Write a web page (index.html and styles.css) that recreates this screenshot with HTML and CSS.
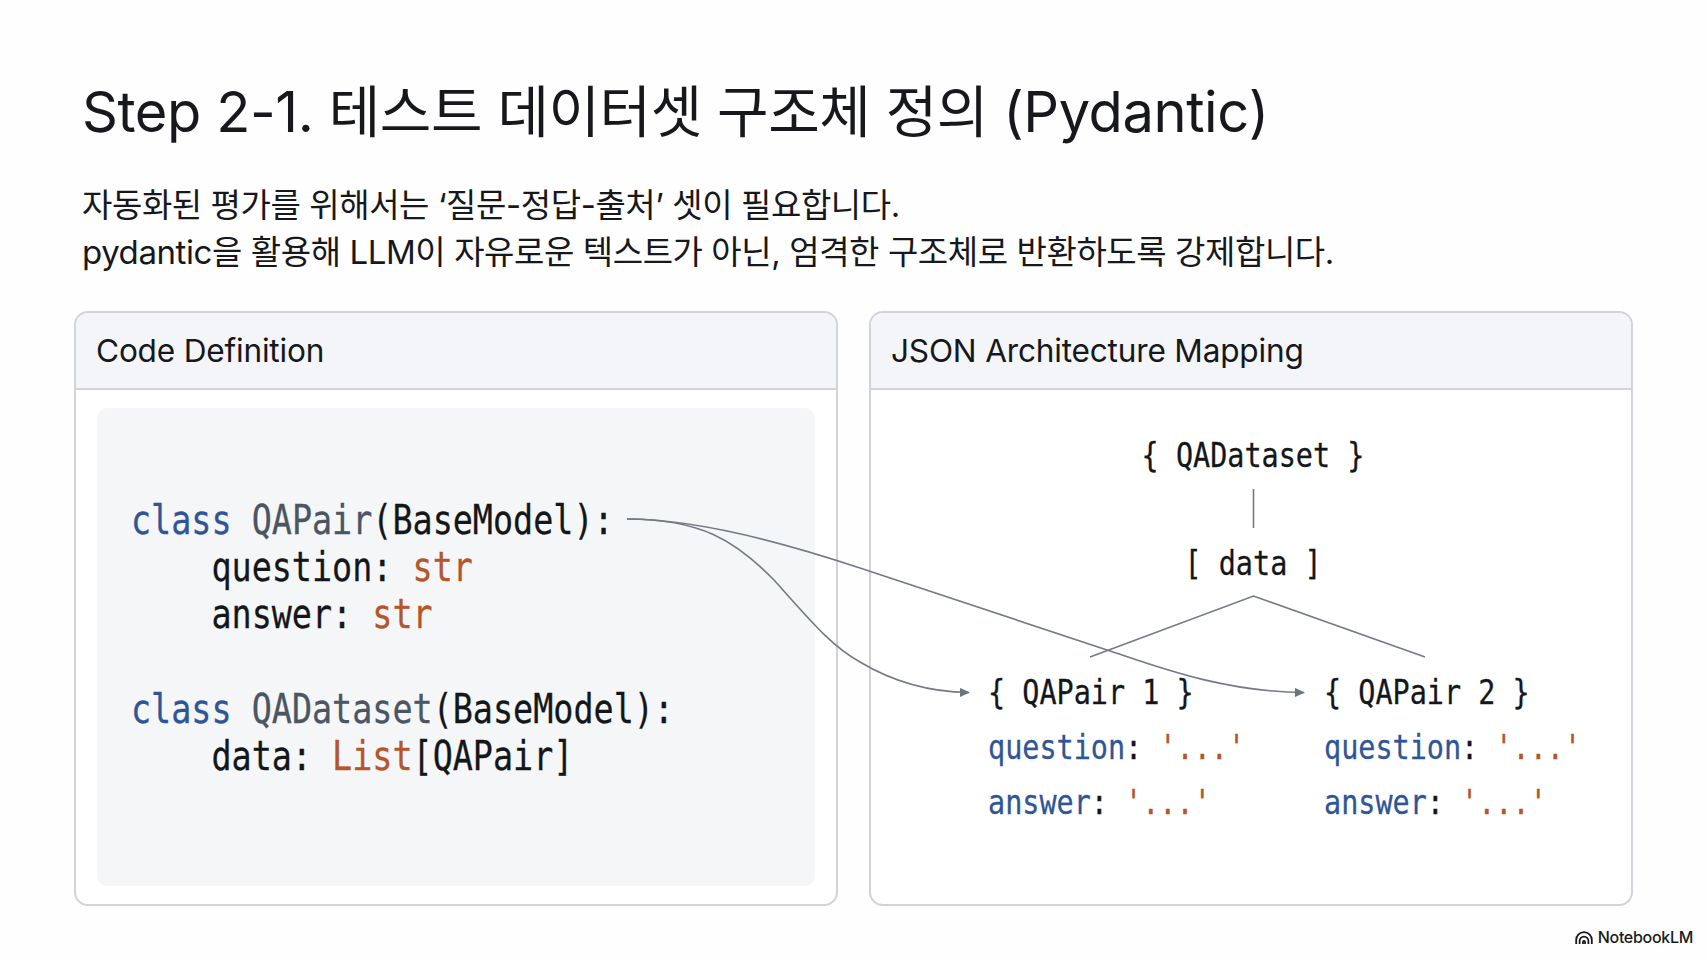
FILE: index.html
```html
<!DOCTYPE html>
<html lang="ko">
<head>
<meta charset="utf-8">
<title>Step 2-1</title>
<link rel="stylesheet" href="styles.css">
</head>
<body>
<main class="page">
  <h1 class="title">Step 2-1. 테스트 데이터셋 구조체 정의 (Pydantic)</h1>
  <p class="lead">자동화된 평가를 위해서는 ‘질문-정답-출처’ 셋이 필요합니다.<br>pydantic을 활용해 LLM이 자유로운 텍스트가 아닌, 엄격한 구조체로 반환하도록 강제합니다.</p>
  <section class="panels">
    <article class="panel">
      <header class="panel-head">Code Definition</header>
      <div class="panel-body code-wrap">
        <div class="code-block">
          <div class="code-line"><span class="kw">class</span> <span class="name">QAPair</span>(BaseModel):</div>
          <div class="code-line">    question: <span class="type">str</span></div>
          <div class="code-line">    answer: <span class="type">str</span></div>
          <div class="code-line code-gap"></div>
          <div class="code-line"><span class="kw">class</span> <span class="name">QADataset</span>(BaseModel):</div>
          <div class="code-line">    data: <span class="type">List</span>[QAPair]</div>
        </div>
      </div>
    </article>
    <article class="panel">
      <header class="panel-head">JSON Architecture Mapping</header>
      <div class="panel-body diagram">
        <div class="node node-root">{ QADataset }</div>
        <div class="node node-data">[ data ]</div>
        <div class="pairs">
          <div class="pair">
            <div class="node">{ QAPair 1 }</div>
            <div class="node"><span class="key">question</span>: <span class="val">'...'</span></div>
            <div class="node"><span class="key">answer</span>: <span class="val">'...'</span></div>
          </div>
          <div class="pair">
            <div class="node">{ QAPair 2 }</div>
            <div class="node"><span class="key">question</span>: <span class="val">'...'</span></div>
            <div class="node"><span class="key">answer</span>: <span class="val">'...'</span></div>
          </div>
        </div>
      </div>
    </article>
  </section>
  <footer class="brand">
    <svg class="brand-icon" viewBox="0 0 18 13" aria-hidden="true">
      <path d="M1.2 13V9a7.8 7.8 0 0 1 15.6 0v4" />
      <path d="M4.6 13V10a4.4 4.4 0 0 1 8.8 0v3" />
      <path d="M8 13v-2a1 1 0 0 1 2 0v2" />
    </svg>
    <span>NotebookLM</span>
  </footer>
  <svg class="links" viewBox="0 0 1707 960" aria-hidden="true">
    <defs>
      <marker id="tip" markerWidth="11" markerHeight="10" refX="9" refY="4.5" orient="auto" markerUnits="userSpaceOnUse">
        <path d="M0 0L10 4.5L0 9Z" fill="#6c757f"/>
      </marker>
    </defs>
    <path class="wire" d="M1253.5 489V528"/>
    <path class="wire" d="M1090 657L1253.5 596L1425 657"/>
    <path class="wire" marker-end="url(#tip)" d="M627 519C700 519 735 540 774 580C810 620 830 645 860 662C890 680 925 692 969 692.5"/>
    <path class="wire" marker-end="url(#tip)" d="M627 519C690 519 770 538 860 568C960 601 1040 628 1107 650C1150 664 1220 692 1304 692.5"/>
  </svg>
</main>
</body>
</html>
```
FILE: styles.css
```css
* { box-sizing: border-box; }
html, body { margin: 0; padding: 0; background: #fff; }
.page {
  position: relative;
  width: 1707px;
  height: 960px;
  padding: 77px 74px 0;
  overflow: hidden;
  background: #fefefe;
  color: #16181b;
  font-family: Inter, "Noto Sans CJK KR", sans-serif;
}
.title {
  margin: 0 0 0 8px;
  font-size: 56px;
  font-weight: 400;
  line-height: 70px;
  letter-spacing: -0.42px;
  white-space: nowrap;
}
.lead {
  margin: 35px 0 0 8px;
  font-size: 33px;
  line-height: 47px;
  letter-spacing: -0.42px;
  white-space: nowrap;
}
.panels {
  display: grid;
  grid-template-columns: 764px 764px;
  gap: 31px;
  margin-top: 35px;
  height: 595px;
}
.panel {
  display: flex;
  flex-direction: column;
  border: 2px solid #d0d4d9;
  border-radius: 14px;
  overflow: hidden;
  background: #fff;
}
.panel-head {
  flex: none;
  height: 77px;
  padding: 0 20px;
  border-bottom: 2px solid #d0d4d9;
  background: #f3f5f8;
  font-size: 31.6px;
  line-height: 75px;
  letter-spacing: -0.2px;
}
.panel-body { flex: 1; min-height: 0; }
.code-wrap { padding: 18px 21px; }
.code-block {
  height: 100%;
  padding: 89px 34px 0;
  border-radius: 10px;
  background: #f4f6f8;
}
.code-line {
  height: 47.2px;
  font-family: "DejaVu Sans Mono", monospace;
  font-size: 40px;
  line-height: 47.2px;
  color: #14171a;
  white-space: pre;
  -webkit-text-stroke: 0.3px;
  transform: scaleX(.835);
  transform-origin: left top;
}
.kw, .key { color: #2f5597; }
.name { color: #4b5563; }
.type, .val { color: #b4562a; }
.diagram { padding: 40px 0 0 117px; }
.node {
  font-family: "DejaVu Sans Mono", monospace;
  font-size: 34.5px;
  line-height: 55px;
  color: #14171a;
  white-space: pre;
  -webkit-text-stroke: 0.3px;
  transform: scaleX(.825);
  transform-origin: left top;
}
.node-root, .node-data {
  margin-left: -113px;
  text-align: center;
  transform-origin: center top;
}
.node-root { line-height: 50px; }
.node-data { margin-top: 58px; line-height: 50px; }
.pairs { display: flex; margin-top: 77px; }
.pair { flex: none; width: 336px; }
.brand {
  display: flex;
  align-items: center;
  justify-content: flex-end;
  gap: 5px;
  height: 20px;
  margin: 21px -60px 0 0;
  font-size: 16px;
  font-weight: 500;
  letter-spacing: -0.3px;
  color: #1a1a1a;
}
.brand-icon { width: 18px; height: 13px; }
.brand-icon path { fill: none; stroke: #1a1a1a; stroke-width: 1.8; }
.links {
  position: absolute;
  left: 0;
  top: 0;
  width: 1707px;
  height: 960px;
  pointer-events: none;
}
.wire { fill: none; stroke: #727b85; stroke-width: 1.6; }
```
